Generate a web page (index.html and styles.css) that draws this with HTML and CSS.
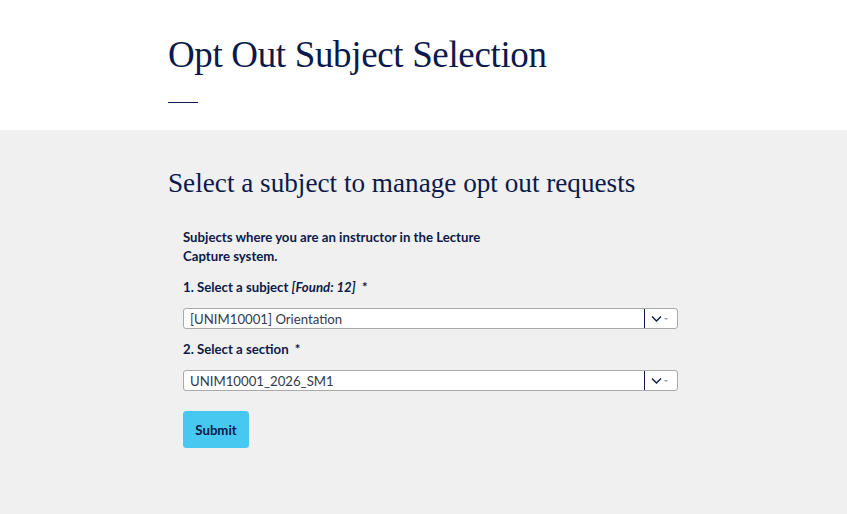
FILE: index.html
```html
<!DOCTYPE html>
<html lang="en">
<head>
<meta charset="utf-8">
<title>Opt Out Subject Selection</title>
<link rel="stylesheet" href="styles.css">
</head>
<body>
<header class="page-header">
  <div class="container">
    <h1 class="page-title">Opt Out Subject Selection</h1>
    <div class="title-rule"></div>
  </div>
</header>
<main class="page-main">
  <div class="container">
    <h2 class="section-title">Select a subject to manage opt out requests</h2>
    <form class="form">
      <p class="intro">Subjects where you are an instructor in the Lecture Capture system.</p>
      <div class="field">
        <label class="label">1. Select a subject <em class="found">[Found: 12]</em> <span class="req">*</span></label>
        <div class="select">
          <span class="select-value">[UNIM10001] Orientation</span>
          <span class="select-btn">
            <svg width="22" height="8" viewBox="0 0 22 8"><path d="M1 1.5 L5.5 6 L10 1.5" fill="none" stroke="#0b1a4a" stroke-width="1.4"/><path d="M13 3 L17 3 L15 5 Z" fill="#9a9a9a"/></svg>
          </span>
        </div>
      </div>
      <div class="field">
        <label class="label">2. Select a section <span class="req">*</span></label>
        <div class="select">
          <span class="select-value">UNIM10001_2026_SM1</span>
          <span class="select-btn">
            <svg width="22" height="8" viewBox="0 0 22 8"><path d="M1 1.5 L5.5 6 L10 1.5" fill="none" stroke="#0b1a4a" stroke-width="1.4"/><path d="M13 3 L17 3 L15 5 Z" fill="#9a9a9a"/></svg>
          </span>
        </div>
      </div>
      <button type="button" class="submit">Submit</button>
    </form>
  </div>
</main>
</body>
</html>
```
FILE: styles.css
```css
* { box-sizing: border-box; }
html, body { margin: 0; padding: 0; }
body {
  font-family: "Source Sans Pro", Lato, "Noto Sans", sans-serif;
  color: #0b1a4a;
  background: #f0f0f0;
  min-height: 514px;
}
.container {
  width: 525px;
  margin-left: 168px;
}
.page-header {
  background: #ffffff;
  height: 130px;
  padding-top: 33px;
}
.page-title {
  margin: 0;
  font-family: "Liberation Serif", "DejaVu Serif", serif;
  font-weight: 400;
  font-size: 37px;
  line-height: 44px;
  letter-spacing: -0.35px;
  color: #0b1a4a;
}
.title-rule {
  width: 30px;
  height: 1px;
  background: #0b1a4a;
  margin-top: 25px;
}
.page-main {
  padding-top: 36px;
  padding-bottom: 60px;
}
.section-title {
  margin: 0;
  font-family: "Liberation Serif", "DejaVu Serif", serif;
  font-weight: 400;
  font-size: 27.2px;
  line-height: 34px;
  color: #0b1a4a;
}
.form {
  padding: 0 15px;
  margin-top: 28px;
}
.intro {
  margin: 0;
  width: 310px;
  font-weight: 700;
  font-size: 13.2px;
  line-height: 19px;
}
.field { margin-top: 12px; }
.field + .field { margin-top: 11px; }
.label {
  display: block;
  font-weight: 700;
  font-size: 13.2px;
  line-height: 19px;
}
.found { font-weight: 700; font-style: italic; }
.req { margin-left: 3px; }
.select {
  margin-top: 11px;
  height: 21px;
  background: #fff;
  border: 1px solid #a9a9a9;
  border-radius: 3px;
  display: flex;
  align-items: stretch;
}
.select-value {
  flex: 1;
  padding-left: 6px;
  font-size: 13.2px;
  line-height: 20px;
  color: #333a4a;
  font-weight: 400;
}
.select-btn {
  width: 33px;
  border-left: 1px solid #0b1a4a;
  display: flex;
  align-items: center;
  justify-content: center;
  padding-left: 2px;
}
.submit {
  margin-top: 20px;
  width: 66px;
  height: 37px;
  background: #46c8f0;
  border: 1px solid #46c8f0;
  border-radius: 3px;
  font-family: "Source Sans Pro", Lato, "Noto Sans", sans-serif;
  font-weight: 700;
  font-size: 13.2px;
  color: #0b1a4a;
  padding: 0;
}
```
